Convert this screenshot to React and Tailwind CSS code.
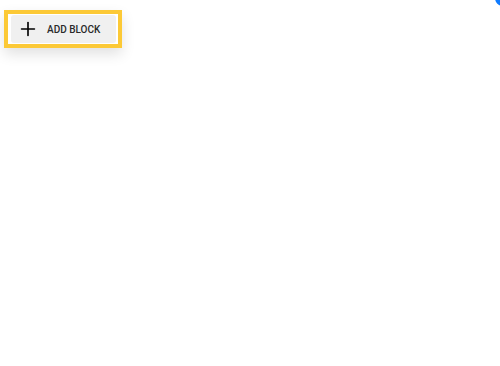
import { Plus } from "lucide-react";

const App = () => {
  return (
    <div className="relative w-[500px] h-[366px] overflow-hidden bg-white font-['Roboto',sans-serif]">
      <div className="pt-[10px] pl-[4px]">
        <div className="inline-flex border-4 border-[#fcc936] bg-white shadow-[0_6px_14px_rgba(0,0,0,0.12)] pt-[1px] pb-[1px] pl-[3px] pr-[2px]">
          <button
            type="button"
            className="flex items-center h-[28px] w-[105px] rounded-[3px] bg-[#f0f0f0] pl-[6px] text-[#2a2a2a]"
          >
            <Plus size={22} strokeWidth={1.8} className="text-black" />
            <span className="ml-[8px] text-[10px] font-medium">
              ADD BLOCK
            </span>
          </button>
        </div>
      </div>

      {/* blue dot in the corner */}
      <div className="absolute -top-[10px] -right-[11px] w-[16px] h-[16px] rounded-full bg-[#0f7bff]"></div>
    </div>
  );
};

export default App;
